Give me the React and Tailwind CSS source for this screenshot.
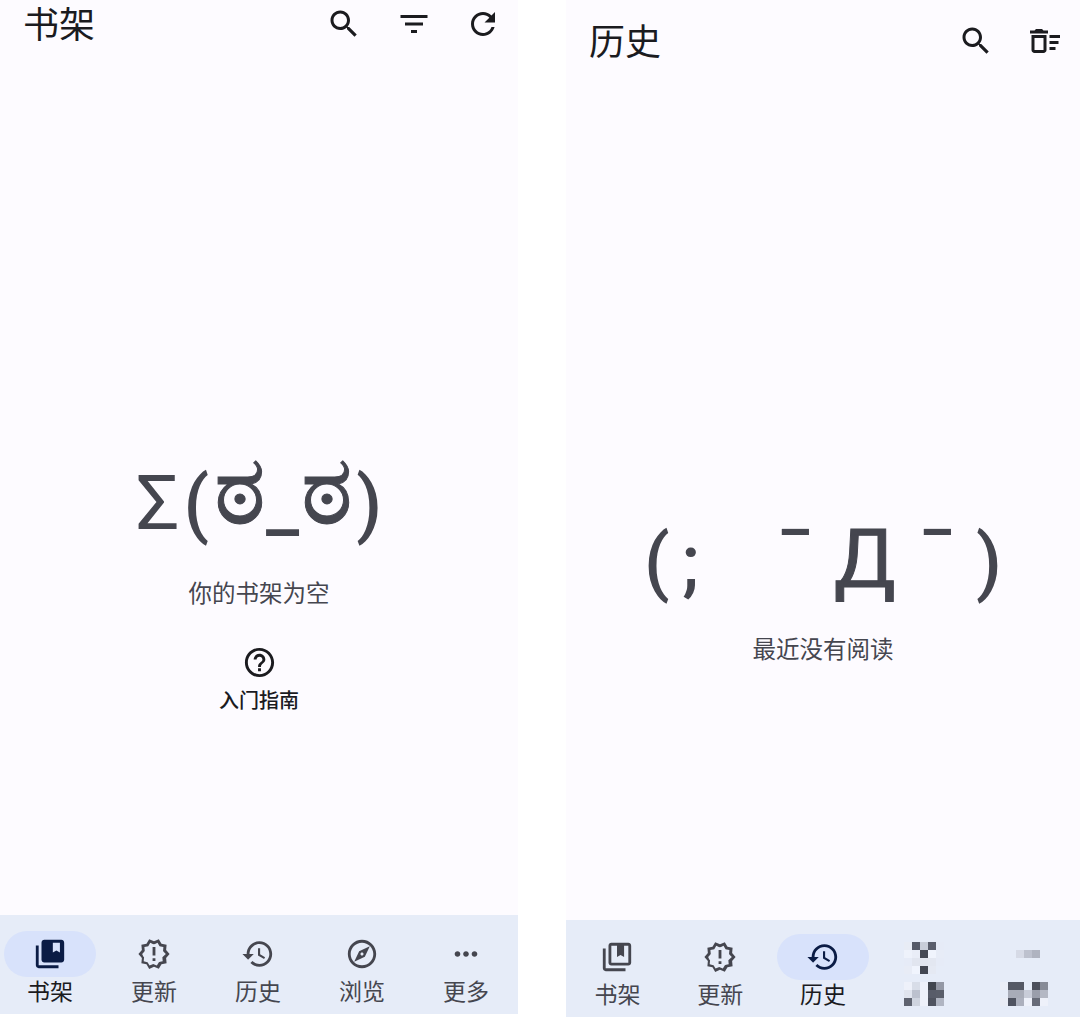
import React from 'react';

const font = "font-['Roboto','Noto_Sans_CJK_SC',sans-serif]";

const bg = '#e6ecf8';

// pixelated nav entries, values read off the reference
const mosaicFour = [
  '#e8ecf5', '#555a68', '#c8cdd9', '#5a5e6c', '#e6ebf7',
  '#eef2fb', '#e9edf7', '#454955', '#f0f4fd', '#e7ecf7',
  '#e6ebf7', '#e1e5ef', '#e1e5ef', '#e3e7f1', '#e6ebf7',
  '#e8ecf6', '#f0f4fd', '#434752', '#e5e9f3', bg,
  bg, bg, bg, bg, bg,
  '#eef1fa', '#d8dde8', '#eef1fa', '#42464f', '#9498a5',
  '#e0e4ee', '#bcc1ce', '#eef1fa', '#585c69', '#5a5e6a',
  '#5f6370', '#cfd4df', '#eef1fa', '#4f535f', '#b0b5c2',
];

const mosaicFive = [
  bg, bg, bg, bg, bg, bg,
  bg, bg, '#d6dae6', '#bdc1ce', '#afb3c0', bg,
  bg, bg, bg, bg, bg, bg,
  bg, bg, bg, bg, bg, bg,
  bg, bg, bg, bg, bg, bg,
  '#ebeef7', '#555965', '#555965', bg, '#4c505c', '#878b97',
  bg, '#a8acb8', '#a8acb8', '#c8ccd8', '#9a9eab', '#b4b8c4',
  '#e9ecf5', '#4f5360', '#acb0bd', '#eef1fa', '#676b78', '#eef1fa',
];

const Icon = ({ d, className }) => (
  <svg viewBox="0 0 24 24" className={className} fill="currentColor">
    <path fillRule="evenodd" d={d} />
  </svg>
);

const paths = {
  search: 'M15.5 14h-.79l-.28-.27C15.41 12.59 16 11.110 16 9.500 16 5.910 13.090 3 9.500 3S3 5.910 3 9.500 5.910 16 9.500 16c1.610 0 3.090-.590 4.230-1.570l.270.280v.790l5 4.990L20.490 19l-4.990-5zm-6 0C7.010 14 5 11.990 5 9.500S7.010 5 9.500 5 14 7.010 14 9.500 11.990 14 9.500 14z',
  filter: 'M10 18h4v-2h-4v2zM3 6v2h18V6H3zm3 7h12v-2H6v2z',
  refresh: 'M17.650 6.350C16.200 4.900 14.210 4 12 4c-4.420 0-7.990 3.580-7.990 8s3.570 8 7.990 8c3.730 0 6.840-2.550 7.730-6h-2.080c-.820 2.330-3.040 4-5.650 4-3.310 0-6-2.690-6-6s2.690-6 6-6c1.660 0 3.140.690 4.220 1.780L13 11h7V4l-2.350 2.350z',
  help: 'M11 18h2v-2h-2v2zm1-16C6.480 2 2 6.480 2 12s4.480 10 10 10 10-4.480 10-10S17.520 2 12 2zm0 18c-4.410 0-8-3.590-8-8s3.590-8 8-8 8 3.590 8 8-3.590 8-8 8zm0-14c-2.210 0-4 1.790-4 4h2c0-1.100.900-2 2-2s2 .900 2 2c0 2-3 1.750-3 5h2c0-2.250 3-2.500 3-5 0-2.210-1.790-4-4-4z',
  sweep: 'M15 16h4v2h-4zM15 8h7v2h-7zM15 12h6v2h-6zM3 18c0 1.100.900 2 2 2h6c1.100 0 2-.900 2-2V8H3v10zM5 10h6v8H5v-8zM10 4H6L5 5H2v2h12V5h-3z',
  bookFilled: 'M4 6H2v14c0 1.100.900 2 2 2h14v-2H4V6zM20 2H8c-1.100 0-2 .900-2 2v12c0 1.100.900 2 2 2h12c1.100 0 2-.900 2-2V4c0-1.100-.900-2-2-2zm-1 9l-2.500-1.500L14 11V4h5v7z',
  bookOutline: 'M4 6H2v14c0 1.100.900 2 2 2h14v-2H4V6zM20 2H8c-1.100 0-2 .900-2 2v12c0 1.100.900 2 2 2h12c1.100 0 2-.900 2-2V4c0-1.100-.900-2-2-2zm0 14H8V4h4v8l2.500-1.500L17 12V4h3v12z',
  alert: 'M23 12l-2.440-2.790.340-3.690-3.610-.820-1.890-3.200L12 2.960 8.600 1.500 6.710 4.690 3.100 5.500l.340 3.700L1 12l2.440 2.790-.340 3.700 3.610.820L8.600 22.500l3.400-1.470 3.400 1.460 1.890-3.190 3.610-.820-.340-3.690L23 12zm-4.560 1.700-.550.630.080.840.180 1.950-1.900.430-.820.190-.430.720-.990 1.680-1.780-.770-.790-.340-.790.340-1.780.770-.990-1.670-.430-.720-.820-.190-1.900-.430.180-1.960.080-.840-.550-.630L3.650 12l1.290-1.470.550-.630-.090-.850-.180-1.940 1.900-.430.820-.190.430-.720.990-1.680 1.780.770.790.340.790-.340 1.780-.770.990 1.680.430.720.820.190 1.900.430-.180 1.950-.080.840.550.630L20.350 12l-1.910 1.700zM11 15h2v2h-2zm0-8h2v6h-2z',
  history: 'M13 3c-4.970 0-9 4.030-9 9H1l3.890 3.890.070.140L9 12H6c0-3.870 3.130-7 7-7s7 3.130 7 7-3.130 7-7 7c-1.930 0-3.680-.790-4.940-2.060l-1.420 1.420C8.270 19.990 10.510 21 13 21c4.970 0 9-4.030 9-9s-4.030-9-9-9zm-1 5v5l4.280 2.540.720-1.210-3.500-2.080V8H12z',
  explore: 'M12 2C6.480 2 2 6.480 2 12s4.480 10 10 10 10-4.480 10-10S17.520 2 12 2zm0 18c-4.410 0-8-3.590-8-8s3.590-8 8-8 8 3.590 8 8-3.590 8-8 8zm-5.500-2.500l7.510-3.490L17.500 6.500 9.990 9.990 6.500 17.500zm5.500-6.600c.610 0 1.100.490 1.100 1.100s-.490 1.100-1.100 1.100-1.100-.490-1.100-1.100.490-1.100 1.100-1.100z',
  more: 'M6 10c-1.100 0-2 .900-2 2s.900 2 2 2 2-.900 2-2-.900-2-2-2zm12 0c-1.100 0-2 .900-2 2s.900 2 2 2 2-.900 2-2-.900-2-2-2zm-6 0c-1.100 0-2 .900-2 2s.900 2 2 2 2-.900 2-2-.900-2-2-2z',
};

const NavItem = ({ d, label, active }) => (
  <div className="flex-1 flex flex-col items-center">
    <div className={`w-[92px] h-[46px] rounded-full flex items-center justify-center ${active ? 'bg-[#d8e2fb] text-[#0b1c45]' : 'text-[#45464f]'}`}>
      <Icon d={d} className="w-[34px] h-[34px]" />
    </div>
    <span className={`text-[23px] leading-[30px] mt-[1px] ${active ? 'text-[#1b1b1f]' : 'text-[#45464f]'}`}>{label}</span>
  </div>
);

const MosaicItem = ({ cells, className }) => (
  <div className="flex-1 flex justify-center pt-[8px]">
    <div className={`grid auto-rows-[8px] h-fit ${className}`}>
      {cells.map((c, i) => (
        <div key={i} style={{ backgroundColor: c }} />
      ))}
    </div>
  </div>
);

const ActionButton = ({ d }) => (
  <div className="w-[69.5px] flex justify-center">
    <Icon d={d} className="w-[36px] h-[36px]" />
  </div>
);

const Header = ({ title, className, children }) => (
  <div className={`flex items-center justify-between pl-[23px] ${className}`}>
    <h1 className="text-[36px] leading-[44px] mt-[4px] text-[#1b1b1f]">{title}</h1>
    <div className="flex items-center text-[#1b1b1f]">{children}</div>
  </div>
);

const App = () => {
  return (
    <div className={`w-[1080px] h-[1017px] bg-white flex overflow-hidden ${font}`}>
      {/* left phone */}
      <div className="w-[518px] h-[1014px] bg-[#fdfbff] flex flex-col">
        <Header title="书架" className="pt-0">
          <ActionButton d={paths.search} />
          <ActionButton d={paths.filter} />
          <ActionButton d={paths.refresh} />
        </Header>
        <div className="flex-1 flex flex-col items-center pt-[394px]">
          <div className="text-[74px] leading-[96px] text-[#45464f] whitespace-nowrap">
            <span className="text-[76px]">Σ</span>
            <span className="ml-[4px] font-medium">(</span>
            <span className="ml-[5px] text-[98px] leading-none align-[5px] [-webkit-text-stroke:1px_#45464f]">ಠ</span>
            <span className="font-medium">_</span>
            <span className="ml-[2px] text-[98px] leading-none align-[5px] [-webkit-text-stroke:1px_#45464f]">ಠ</span>
            <span className="ml-[3px] font-medium">)</span>
          </div>
          <p className="text-[23.5px] leading-[30px] text-[#45464f] mt-[27px]">你的书架为空</p>
          <Icon d={paths.help} className="w-[35px] h-[35px] text-[#1b1b1f] mt-[36px]" />
          <span className="text-[20px] leading-[26px] font-medium text-[#1b1b1f] mt-[8px]">入门指南</span>
        </div>
        <div className="h-[99px] -ml-[2px] bg-[#e6ecf8] flex pt-[16px]">
          <NavItem active label="书架" d={paths.bookFilled} />
          <NavItem label="更新" d={paths.alert} />
          <NavItem label="历史" d={paths.history} />
          <NavItem label="浏览" d={paths.explore} />
          <NavItem label="更多" d={paths.more} />
        </div>
      </div>

      <div className="w-[48px]" />

      {/* right phone */}
      <div className="w-[514px] h-[1017px] bg-[#fdfbff] flex flex-col">
        <Header title="历史" className="pt-[17px]">
          <ActionButton d={paths.search} />
          <ActionButton d={paths.sweep} />
        </Header>
        <div className="flex-1 flex flex-col items-center pt-[446px]">
          <div className="text-[74px] leading-[96px] text-[#45464f] whitespace-nowrap">
            <span className="font-medium">(</span>
            <span className="ml-[12px] font-medium">;</span>
            <span className="ml-[76px] text-[82px] font-medium">¯</span>
            <span className="ml-[19px] text-[82px] [-webkit-text-stroke:1px_#45464f]">Д</span>
            <span className="ml-[22px] text-[82px] font-medium">¯</span>
            <span className="ml-[19px] font-medium">)</span>
          </div>
          <p className="text-[23.5px] leading-[30px] text-[#45464f] mt-[25px]">最近没有阅读</p>
        </div>
        <div className="h-[97px] bg-[#e6ecf8] flex pt-[14px]">
          <NavItem label="书架" d={paths.bookOutline} />
          <NavItem label="更新" d={paths.alert} />
          <NavItem active label="历史" d={paths.history} />
          <MosaicItem cells={mosaicFour} className="grid-cols-[repeat(5,8px)] mr-[4px]" />
          <MosaicItem cells={mosaicFive} className="grid-cols-[repeat(6,8px)] mr-[10px]" />
        </div>
      </div>
    </div>
  );
};

export default App;
